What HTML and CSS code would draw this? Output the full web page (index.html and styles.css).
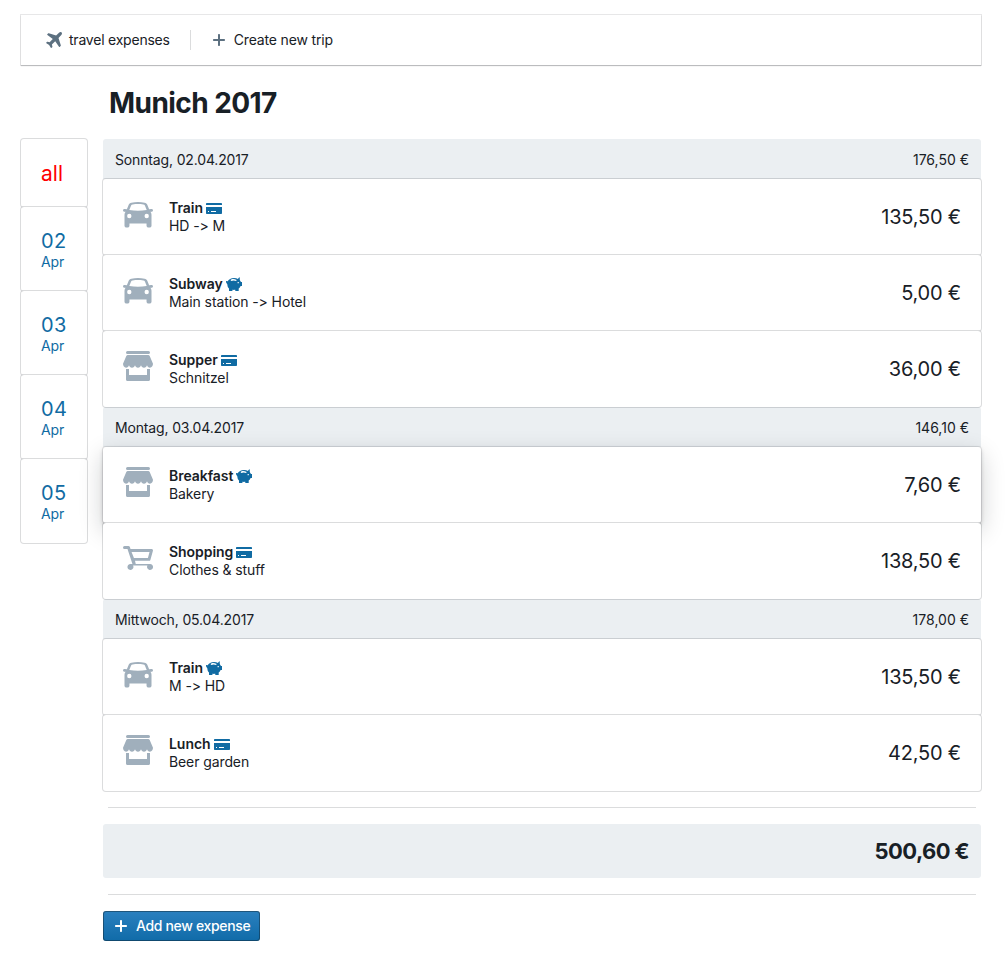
FILE: index.html
```html
<!DOCTYPE html>
<html lang="en">
<head>
<meta charset="utf-8">
<title>travel expenses</title>
<link rel="stylesheet" href="styles.css">
</head>
<body>
<svg class="defs" width="0" height="0">
  <symbol id="car" viewBox="0 0 20 20"><path fill-rule="evenodd" d="M5.600 2.500C7 2.100 8.500 2 10 2s3 .1 4.400.5c.9.2 1.500.6 1.800 1.300L17.400 6.800l1.400-.2c.7-.1 1.200.3 1.200.9s-.4 1-1 1h-.7c.5.6.7 1.300.7 2V17.800c0 .7-.6 1.200-1.300 1.200h-.7c-.7 0-1.300-.5-1.300-1.200v-1.400H4.300v1.400C4.300 18.500 3.700 19 3 19h-.7C1.600 19 1 18.500 1 17.800V10.500c0-.7.2-1.400.7-2H1c-.6 0-1-.4-1-1s.5-1 1.200-.9L2.600 6.800l1.200-3c.3-.7.900-1.100 1.800-1.300zM6.400 3.600c-.5.1-.8.300-1 .7L4.200 7.400c1.900.4 3.800.5 5.800.5s3.900-.1 5.800-.5l-1.200-3.100c-.2-.4-.5-.6-1-.7-2.400-.4-4.800-.4-7.200 0zM4.200 9.900a1.450 1.450 0 1 0 0 2.900 1.450 1.450 0 0 0 0-2.900zM15.800 9.900a1.450 1.450 0 1 0 0 2.900 1.450 1.450 0 0 0 0-2.900z"/></symbol>
  <symbol id="shop" viewBox="0 0 20 20"><path d="M3 0h14a1 1 0 0 1 0 2H3a1 1 0 0 1 0-2zM3.200 2.700h13.600c.4 0 .8.3 1 .7L20 8.500c0 1.500-.9 2.600-2 2.600-1 0-1.700-.6-2-1.600-.3 1-1 1.600-2 1.600s-1.700-.6-2-1.600c-.3 1-1 1.600-2 1.600s-1.700-.6-2-1.600c-.3 1-1 1.600-2 1.600s-1.700-.6-2-1.600c-.3 1-1 1.600-2 1.600C.9 11.100 0 10 0 8.500l2.200-5.100c.2-.4.6-.7 1-.7zM2 12h2v4h12v-4h2v7c0 .6-.4 1-1 1H3c-.6 0-1-.4-1-1z"/></symbol>
  <symbol id="cart" viewBox="0 0 20 20"><path fill-rule="evenodd" d="M1 2h2.600c.5 0 .8.300 1 .7L5 4h14c.6 0 1 .4 1 1l-1.700 6.100c-.1.500-.5.800-1 .800H8L8.500 14H18a2 2 0 1 1-1.700 1H6.700A2 2 0 1 1 5 14h1.300L3 4H1a1 1 0 0 1 0-2zM5.700 6l1.600 4h9.300l1.100-4z"/></symbol>
  <symbol id="card" viewBox="0 0 16 16"><path fill-rule="evenodd" d="M1 3h14c.6 0 1 .4 1 1v1H0V4c0-.6.400-1 1-1zM0 7h16v6c0 .6-.4 1-1 1H1c-.6 0-1-.4-1-1zM2 11v1h1v-1zM5 11v1h5v-1z"/></symbol>
  <symbol id="piggy" viewBox="0 0 16 16"><path fill-rule="evenodd" d="M8 2c1.500 0 2.900.4 4 1.100.3-.9.8-1.600 1.700-1.900.2 1-.1 2.200.3 3.200.5.500.7 1 .9 1.600H16v4h-1.400c-.4 1-1 1.900-1.900 2.600V15H9.300v-1.200c-1 .2-1.900.2-2.900 0V15H3v-2.400C2 11.700 1.500 10.500 1.400 8.800 1.200 7.900.4 7 0 6.300V5l1.700.3C2.700 3.400 5 2 8 2zM5.800 3.200c-.6.200-1 .5-1.300.9l.8.9c1.400-.8 3.200-.8 4.800-.1l.6-.9C9.100 3.200 7.400 2.900 5.800 3.200zM11.600 6v1.200h1.200V6z"/></symbol>
  <symbol id="plane" viewBox="0 0 16 16"><path d="M15.600.4c-.7-.7-1.900-.4-2.600.3L10.100 3.600 2.800 1.300c-.3-.1-.6 0-.8.200l-.7.700c-.3.300-.2.700.1.900l5.400 3.800-3.200 3.300-2-.5c-.3-.1-.5 0-.7.200l-.6.600c-.3.300-.2.600.1.800l2.700 1.700 1.700 2.700c.2.300.5.400.8.100l.6-.6c.2-.2.300-.4.200-.7l-.5-2 3.300-3.200 3.800 5.400c.2.300.6.400.9.100l.7-.7c.2-.2.300-.5.200-.8l-2.300-7.300L15.300 3c.7-.7 1-1.900.3-2.600z"/></symbol>
  <symbol id="plus" viewBox="0 0 16 16"><path d="M7 3c0-.6.400-1 1-1s1 .4 1 1v4h4c.6 0 1 .4 1 1s-.4 1-1 1H9v4c0 .6-.4 1-1 1s-1-.4-1-1V9H3c-.6 0-1-.4-1-1s.4-1 1-1h4z"/></symbol>
</svg>
<nav class="navbar">
  <a class="nav-item"><svg class="nav-icon"><use href="#plane"/></svg><span class="nav-brand">travel expenses</span></a>
  <span class="divider"></span>
  <a class="nav-item create"><svg class="nav-icon"><use href="#plus"/></svg><span class="nav-create">Create new trip</span></a>
</nav>
<h1 class="title">Munich 2017</h1>
<div class="layout">
  <aside class="days">
    <a class="day active"><span class="day-num">all</span></a>
    <a class="day"><span class="day-num">02</span><span class="month">Apr</span></a>
    <a class="day"><span class="day-num">03</span><span class="month">Apr</span></a>
    <a class="day"><span class="day-num">04</span><span class="month">Apr</span></a>
    <a class="day"><span class="day-num">05</span><span class="month">Apr</span></a>
  </aside>
  <main class="expenses">
    <header class="group"><span class="date">Sonntag, 02.04.2017</span><span class="subtotal">176,50 €</span></header>
    <article class="expense"><svg class="kind"><use href="#car"/></svg><div class="info"><div class="name">Train<svg class="pay"><use href="#card"/></svg></div><div class="note">HD -&gt; M</div></div><span class="amount">135,50 €</span></article>
    <article class="expense"><svg class="kind"><use href="#car"/></svg><div class="info"><div class="name">Subway<svg class="pay"><use href="#piggy"/></svg></div><div class="note">Main station -&gt; Hotel</div></div><span class="amount">5,00 €</span></article>
    <article class="expense"><svg class="kind"><use href="#shop"/></svg><div class="info"><div class="name">Supper<svg class="pay"><use href="#card"/></svg></div><div class="note">Schnitzel</div></div><span class="amount">36,00 €</span></article>
    <header class="group"><span class="date">Montag, 03.04.2017</span><span class="subtotal">146,10 €</span></header>
    <article class="expense raised"><svg class="kind"><use href="#shop"/></svg><div class="info"><div class="name">Breakfast<svg class="pay"><use href="#piggy"/></svg></div><div class="note">Bakery</div></div><span class="amount">7,60 €</span></article>
    <article class="expense"><svg class="kind"><use href="#cart"/></svg><div class="info"><div class="name">Shopping<svg class="pay"><use href="#card"/></svg></div><div class="note">Clothes &amp; stuff</div></div><span class="amount">138,50 €</span></article>
    <header class="group"><span class="date">Mittwoch, 05.04.2017</span><span class="subtotal">178,00 €</span></header>
    <article class="expense"><svg class="kind"><use href="#car"/></svg><div class="info"><div class="name">Train<svg class="pay"><use href="#piggy"/></svg></div><div class="note">M -&gt; HD</div></div><span class="amount">135,50 €</span></article>
    <article class="expense"><svg class="kind"><use href="#shop"/></svg><div class="info"><div class="name">Lunch<svg class="pay"><use href="#card"/></svg></div><div class="note">Beer garden</div></div><span class="amount">42,50 €</span></article>
    <hr class="rule">
    <div class="total">500,60 €</div>
    <hr class="rule">
    <button class="add"><svg class="add-icon"><use href="#plus"/></svg><span>Add new expense</span></button>
  </main>
</div>
</body>
</html>
```
FILE: styles.css
```css
* { box-sizing: border-box; }
body {
  margin: 0;
  padding: 15px 24px 0 21px;
  background: #fff;
  color: #182026;
  font: 14px/18px Inter, "Liberation Sans", sans-serif;
  font-feature-settings: "calt" 0;
}
svg { display: block; fill: currentColor; flex: none; }
.defs { position: absolute; }
.navbar {
  display: flex;
  align-items: center;
  height: 50px;
  padding: 0 25px;
  box-shadow: 0 0 0 1px rgba(16,22,26,.1), 0 1px 1px rgba(16,22,26,.2);
}
.nav-item { display: flex; align-items: center; gap: 7px; }
.nav-icon { width: 16px; height: 16px; color: #5c7080; }
.nav-brand { letter-spacing: -.22px; }
.nav-create { letter-spacing: -.16px; }
.divider { width: 1px; height: 20px; margin: 0 20px; background: rgba(16,22,26,.15); }
.title {
  margin: 22px 0 19px 88px;
  font-size: 28px;
  line-height: 33px;
  font-weight: 700;
  letter-spacing: -.56px;
}
.layout { display: grid; grid-template-columns: 66px 878px; column-gap: 16px; align-items: start; }
.day {
  display: flex;
  flex-direction: column;
  height: 84px;
  padding: 20px;
  border-radius: 3px;
  background: #fff;
  color: #106ba3;
  box-shadow: 0 0 0 1px rgba(16,22,26,.15);
}
.day.active { height: 68px; color: #f00; }
.day-num { font-size: 20px; line-height: 28px; }
.day:not(.active) .day-num { letter-spacing: .3px; }
.day.active .day-num { font-size: 21px; line-height: 29px; }
.month { line-height: 14px; letter-spacing: -.1px; }
.group {
  display: flex;
  align-items: center;
  justify-content: space-between;
  height: 40px;
  padding: 2px 12px 0;
  border-radius: 3px 3px 0 0;
  background: #ebeff2;
}
.date { letter-spacing: -.15px; }
.expense {
  position: relative;
  display: flex;
  align-items: flex-start;
  height: 76px;
  padding: 20px;
  border-radius: 3px;
  background: #fff;
  box-shadow: 0 0 0 1px rgba(16,22,26,.15);
}
.expense.raised { box-shadow: 0 0 0 1px rgba(16,22,26,.1), 0 2px 4px rgba(16,22,26,.2), 0 8px 24px rgba(16,22,26,.2); }
.kind { width: 30px; height: 30px; margin-right: 16px; color: #a0afbc; }
.info { flex: 1; }
.name { display: flex; align-items: center; gap: 3px; font-weight: 600; letter-spacing: -.05px; }
.note { letter-spacing: -.1px; }
.pay { width: 16px; height: 16px; color: #106ba3; }
.amount { font-size: 20px; line-height: 36px; letter-spacing: -.2px; }
.rule { height: 1px; margin: 16px 5px; border: 0; background: #dbdcdd; }
.total {
  height: 54px;
  padding: 0 12px;
  border-radius: 3px;
  background: #ebeff2;
  font-size: 22px;
  line-height: 55px;
  font-weight: 700;
  letter-spacing: -.6px;
  text-align: right;
}
.add {
  display: flex;
  align-items: center;
  gap: 7px;
  width: 157px;
  height: 30px;
  padding: 0 10px;
  border: 0;
  border-radius: 3px;
  background: linear-gradient(#2b80bf, #106ba8);
  box-shadow: inset 0 0 0 1px rgba(16,22,26,.4);
  color: #fff;
  font: inherit;
  font-weight: 500;
  letter-spacing: -.34px;
  white-space: nowrap;
}
.add-icon { width: 16px; height: 16px; }
```
